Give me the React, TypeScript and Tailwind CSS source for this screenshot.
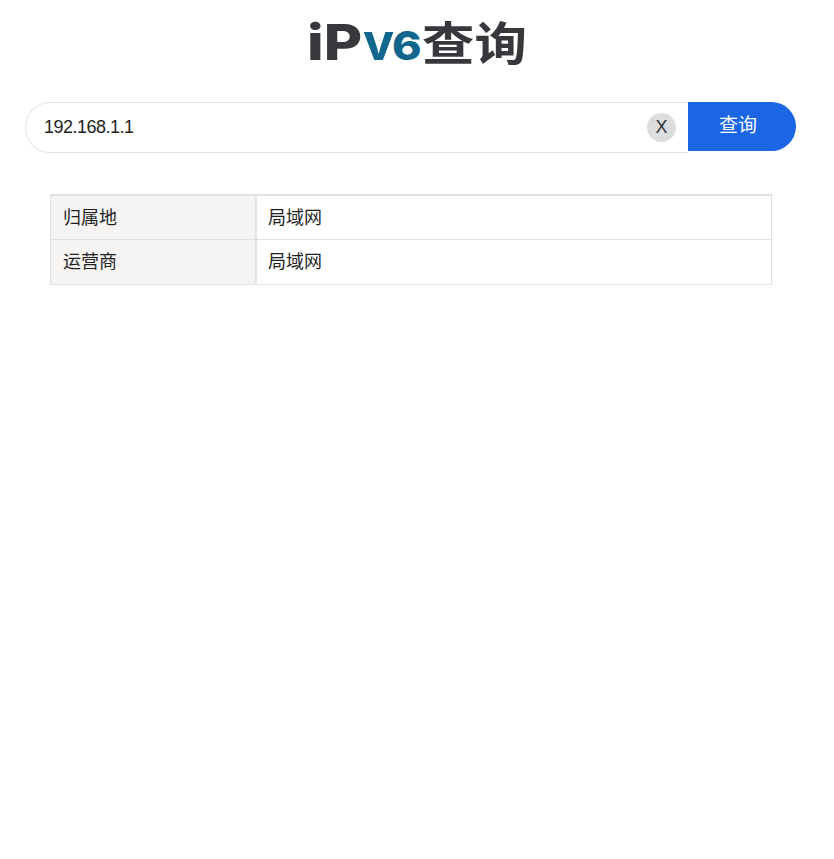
const rows = [
  { label: '归属地', value: '局域网' },
  { label: '运营商', value: '局域网' },
];

const cjk = "font-['Liberation_Sans','Noto_Sans_CJK_SC',sans-serif]";

export default function App() {
  return (
    <div className={`min-h-[859px] bg-white text-[#1f1f1f] ${cjk}`}>
      <div className="flex h-[102px] items-start pl-[307px] pt-[16px]">
        <h1 className="flex h-[60px] items-baseline whitespace-nowrap font-['Inter','Noto_Sans_CJK_SC',sans-serif] text-[#36383c]">
          <span className="inline-block w-[56px] origin-left scale-x-[1.18] text-[50px] font-extrabold leading-none">iP</span>
          <span className="inline-block w-[29px] text-[52px] font-bold leading-none text-[#10668c]">v</span>
          <span className="inline-block w-[30px] origin-left scale-x-[1.12] text-[40px] font-extrabold leading-none text-[#10668c]">6</span>
          <span className="inline-block w-[105px] origin-left scale-x-[1.14] text-[46px] font-bold leading-none">查询</span>
        </h1>
      </div>

      <div className="ml-[25px] flex h-[51px] w-[771px]">
        <div className="flex flex-1 items-center rounded-l-[25px] border border-r-0 border-[#e2e3e6] pl-[18px] pr-[12px]">
          <span className="flex-1 text-[18px] tracking-[-0.5px]">192.168.1.1</span>
          <span className="flex h-[29px] w-[29px] items-center justify-center rounded-full bg-[#dcdddf] text-[18px] text-[#333]">
            X
          </span>
        </div>
        <button className="h-[49px] w-[108px] rounded-r-[25px] bg-[#1a66e5] pr-[8px] text-[19px] text-white">查询</button>
      </div>

      <div className="ml-[50px] mt-[41px] w-[722px] border border-t-2 border-[#e0e0e0]">
        {rows.map((row, i) => (
          <div key={row.label} className={`flex items-center text-[18px] ${i > 0 ? 'h-[45px] border-t border-[#e0e0e0]' : 'h-[43px]'}`}>
            <div className={`flex h-full w-[206px] items-center border-r-2 border-[#e4e4e4] bg-[#f5f4f3] pl-[12px] ${i > 0 ? '' : 'pt-[1px]'}`}>
              {row.label}
            </div>
            <div className={`pl-[11px] ${i > 0 ? '' : 'pt-[1px]'}`}>{row.value}</div>
          </div>
        ))}
      </div>
    </div>
  );
}
